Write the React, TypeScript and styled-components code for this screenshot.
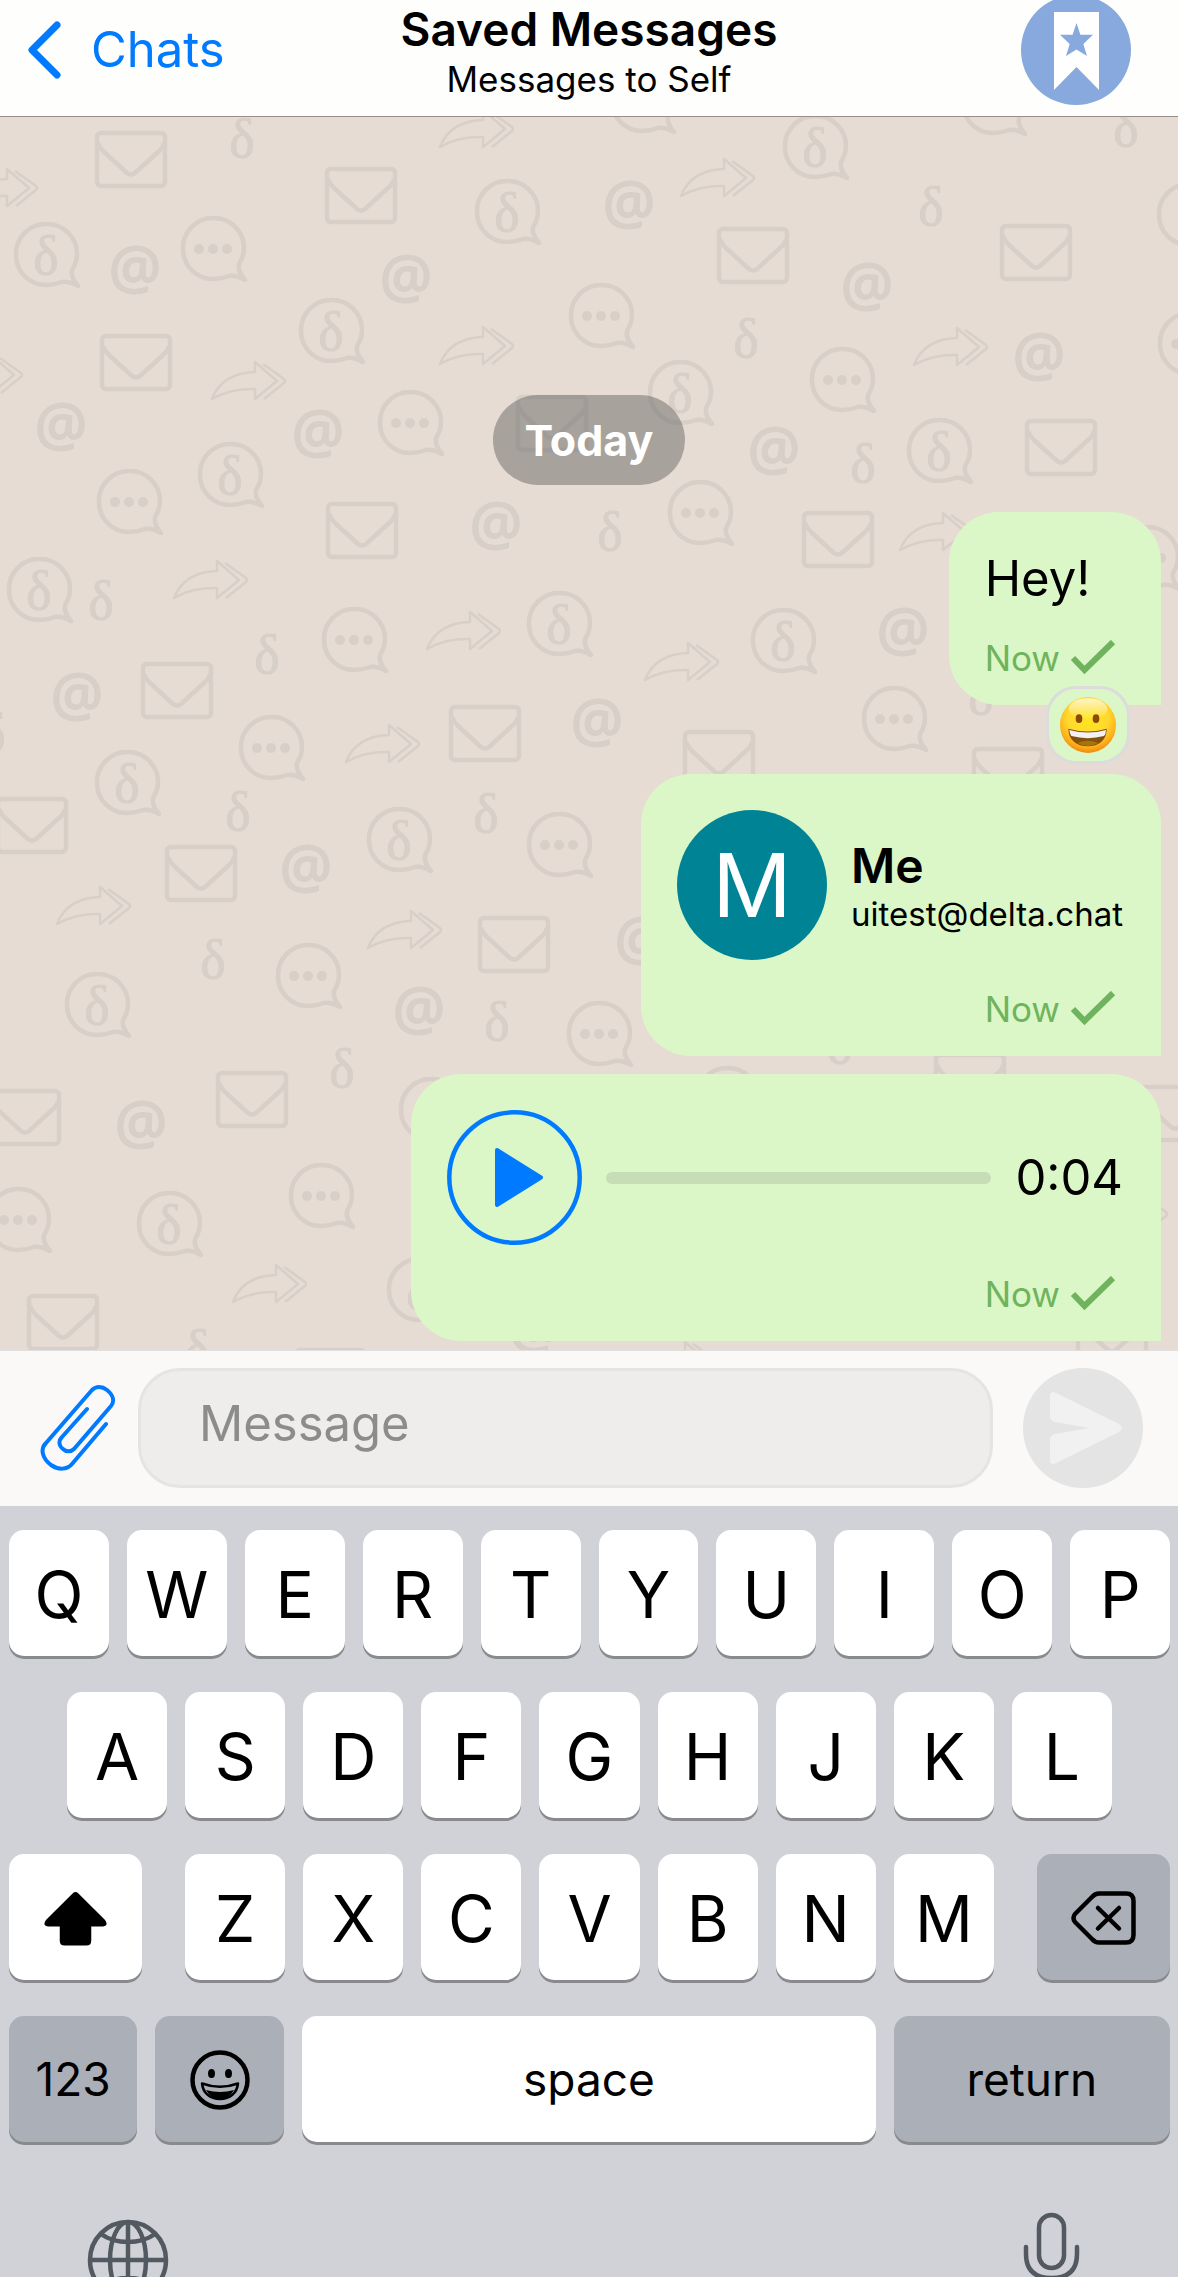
import React from "react";
import styled, { createGlobalStyle } from "styled-components";

const GlobalStyle = createGlobalStyle`
  *, *::before, *::after { box-sizing: border-box; }
  body { margin: 0; font-family: Inter, Roboto, "Liberation Sans", sans-serif; color: #000; }
  button, input { font: inherit; color: inherit; }
  button { border: 0; padding: 0; background: none; cursor: pointer; }
  h1, p { margin: 0; }
  svg { display: block; }
`;

const Screen = styled.div`
  height: 100vh;
  display: flex;
  flex-direction: column;
  overflow: hidden;
`;

/* ---------- header ---------- */

const Header = styled.header`
  flex: none;
  display: grid;
  grid-template-columns: 1fr auto 1fr;
  align-items: center;
  grid-template-rows: 100px;
  padding: 0 27px 16px;
  background: #fefefd;
  border-bottom: 1px solid #968e88;
`;

const BackLink = styled.a`
  display: flex;
  align-items: center;
  gap: 30px;
  font-size: 49px;
  line-height: 60px;
  color: #007aff;
  text-decoration: none;
`;

const TitleBlock = styled.div`
  text-align: center;
`;

const Title = styled.h1`
  font-size: 46px;
  line-height: 58px;
  font-weight: 600;
`;

const Subtitle = styled.p`
  font-size: 35px;
  line-height: 42px;
`;

const AvatarButton = styled.button`
  justify-self: end;
  margin: -5px 20px -5px 0;
  height: 110px;
`;

/* ---------- chat ---------- */

const Chat = styled.main`
  position: relative;
  flex: 1 1 0;
  min-height: 0;
  overflow: hidden;
  background: #e6dcd4;
`;

const Wallpaper = styled.svg`
  position: absolute;
  inset: 0;
  width: 100%;
  height: 100%;
  font-family: "Liberation Serif", serif;
`;

const MessageList = styled.div`
  position: relative;
  height: 100%;
  display: flex;
  flex-direction: column;
  justify-content: flex-end;
  align-items: flex-end;
  gap: 18px;
  padding: 0 17px 9px;
`;

const DayLabel = styled.div`
  align-self: center;
  margin-bottom: 9px;
  padding: 0 32px;
  border-radius: 45px;
  background: rgba(90, 90, 88, 0.45);
  color: #fff;
  font-size: 43px;
  line-height: 90px;
  font-weight: 700;
`;

const Bubble = styled.article<{ $wide?: boolean; $reacted?: boolean }>`
  position: relative;
  display: flex;
  flex-direction: column;
  gap: 28px;
  width: ${(p) => (p.$wide ? "750px" : "auto")};
  max-width: 100%;
  margin-bottom: ${(p) => (p.$reacted ? "51px" : "0")};
  padding: 36px 38px 26px 36px;
  border-radius: 50px 50px 0 50px;
  background: #dbf7c7;
`;

const MessageText = styled.p`
  font-size: 49px;
  line-height: 61px;
`;

const Meta = styled.div`
  display: flex;
  justify-content: flex-end;
  align-items: center;
  gap: 10px;
  padding-right: 7px;
  font-size: 35px;
  line-height: 42px;
  color: #70b35e;
`;

const Reaction = styled.button`
  position: absolute;
  right: 31px;
  bottom: -59px;
  width: 84px;
  height: 78px;
  display: grid;
  place-items: center;
  border: 3px solid #dcdcdc;
  border-radius: 30px;
  background: #dbf7c7;
`;

const Contact = styled.div`
  display: flex;
  align-items: center;
  gap: 24px;
`;

const Initial = styled.span`
  flex: none;
  width: 150px;
  height: 150px;
  border-radius: 50%;
  background: #008495;
  color: #fff;
  font-size: 88px;
  line-height: 150px;
  text-align: center;
`;

const ContactName = styled.p`
  font-size: 48px;
  line-height: 57px;
  font-weight: 600;
`;

const ContactAddress = styled.p`
  font-size: 33px;
  line-height: 40px;
`;

const Player = styled.div`
  display: flex;
  align-items: center;
  gap: 24px;
  font-size: 49px;
  line-height: 61px;
`;

const Seek = styled.input`
  flex: 1;
  min-width: 0;
  height: 12px;
  margin: 0;
  appearance: none;
  border-radius: 6px;
  background: #c7ddb6;
  &::-webkit-slider-thumb { appearance: none; width: 0; height: 0; }
`;

/* ---------- composer ---------- */

const Composer = styled.form`
  flex: none;
  display: flex;
  align-items: center;
  padding: 17px 35px 18px 40px;
  background: #faf9f8;
  border-top: 1px solid #e2dedb;
`;

const MessageField = styled.input`
  flex: 1;
  min-width: 0;
  height: 120px;
  margin: 0 30px 0 22px;
  padding: 0 58px 10px;
  border: 3px solid #e4e4e4;
  border-radius: 42px;
  background: #eeedeb;
  outline: none;
  font-size: 49px;
  &::placeholder { color: #8c8c8b; opacity: 1; }
`;

/* ---------- keyboard ---------- */

const Keyboard = styled.section`
  flex: none;
  display: flex;
  flex-direction: column;
  gap: 36px;
  padding-top: 24px;
  background: #d1d2d7;
`;

const KeyRow = styled.div<{ $inset?: boolean; $gap?: number }>`
  display: flex;
  gap: ${(p) => p.$gap ?? 18}px;
  padding: ${(p) => (p.$inset ? "0 66px 0 67px" : "0 8px 0 9px")};
`;

const KeyGroup = styled.div`
  flex: 808 1 0;
  display: flex;
  gap: 18px;
`;

const Key = styled.button<{ $grow?: number; $tone?: "dark"; $label?: boolean }>`
  flex: ${(p) => p.$grow ?? 100} 1 0;
  min-width: 0;
  height: 126px;
  display: flex;
  justify-content: center;
  align-items: center;
  padding-top: ${(p) => (p.$label ? 0 : 2)}px;
  border-radius: 15px;
  background: ${(p) => (p.$tone === "dark" ? "#abafb7" : "#fff")};
  box-shadow: 0 3px 0 #898a8d;
  font-size: ${(p) => (p.$label ? 46 : 64)}px;
`;

const KeyboardFooter = styled.div`
  height: 99px;
  display: flex;
  justify-content: space-between;
  padding: 34px 96px 0 86px;
  overflow: hidden;
`;

const FooterButton = styled.button`
  height: 96px;
`;

/* ---------- wallpaper ---------- */

type Kind = "env" | "arrow" | "at" | "delta" | "dbub" | "dots";

const ink = "#d7cfc8";

const wallpaper: Record<Kind, [number, number][]> = {
  env: [
    [95, 131], [325, 167], [100, 334], [516, 395], [326, 502], [717, 227], [1000, 224],
    [1025, 419], [802, 511], [141, 662], [449, 705], [-4, 797], [165, 845], [478, 916],
    [683, 730], [972, 747], [216, 1071], [-11, 1089], [27, 1294], [294, 1348], [934, 1053],
    [1139, 1085], [1076, 1308],
  ],
  arrow: [
    [439, 108], [-37, 167], [211, 360], [439, 325], [-52, 354], [680, 157], [913, 326],
    [899, 511], [173, 559], [426, 610], [345, 723], [56, 885], [367, 909], [644, 641],
    [232, 1263], [641, 1340], [1093, 1193],
  ],
  at: [
    [110, 247], [381, 256], [36, 404], [293, 411], [471, 503], [604, 182], [842, 264],
    [1014, 334], [749, 428], [52, 674], [572, 700], [281, 846], [878, 609], [394, 988],
    [616, 918], [116, 1102], [510, 1306],
  ],
  delta: [
    [229, 119], [1113, 108], [918, 187], [733, 319], [850, 444], [597, 512], [88, 581],
    [254, 635], [-20, 713], [225, 792], [473, 794], [200, 940], [484, 1002], [329, 1049],
    [968, 676], [184, 1330], [827, 1025],
  ],
  dbub: [
    [14, 222], [475, 179], [299, 298], [198, 442], [783, 114], [1157, 182], [648, 360],
    [907, 418], [7, 557], [527, 591], [95, 750], [367, 807], [65, 972], [399, 1077],
    [137, 1191], [387, 1257], [751, 608],
  ],
  dots: [
    [181, 216], [569, 283], [378, 390], [97, 469], [610, 68], [961, 70], [810, 347],
    [1158, 311], [668, 480], [322, 607], [239, 715], [527, 812], [276, 943], [567, 1001],
    [289, 1163], [-14, 1187], [862, 686], [1115, 525], [695, 1066],
  ],
};

const BubbleOutline = () => (
  <path d="M64 64Q55 53 59 46Q63 40 63 31A30 30 0 0 0 32 2A30 30 0 0 0 2 33A30 30 0 0 0 33 63Q40 63 48 60Q55 59 64 64Z" />
);

function Glyph({ kind }: { kind: Kind }) {
  switch (kind) {
    case "env":
      return (
        <>
          <rect x="2" y="2" width="68" height="53" rx="4" />
          <path d="M3 12Q5 17 9 21L32 42Q36 45 40 42L63 21Q68 17 69 12" />
        </>
      );
    case "arrow":
      return (
        <g strokeWidth="2.5">
          <path d="M1 39Q11 13 44 12L44 2L66 21L44 39L44 29Q20 28 1 39Z" />
          <path d="M52 4L73 19Q75 21 73 23L53 39" />
        </g>
      );
    case "at":
      return (
        <text x="25" y="42" fontSize="59" fontWeight="600" textAnchor="middle" fontFamily="Open Sans" fill={ink} strokeWidth="1">@</text>
      );
    case "delta":
      return (
        <text x="13" y="38" fontSize="54" textAnchor="middle" fill={ink} strokeWidth="1">δ</text>
      );
    case "dbub":
      return (
        <>
          <BubbleOutline />
          <text x="32" y="52" fontSize="54" textAnchor="middle" fill={ink} strokeWidth="1">δ</text>
        </>
      );
    default:
      return (
        <>
          <BubbleOutline />
          <g fill={ink} stroke="none">
            <circle cx="18" cy="33" r="5" />
            <circle cx="32" cy="33" r="5" />
            <circle cx="46" cy="33" r="5" />
          </g>
        </>
      );
  }
}

const ChatWallpaper = () => (
  <Wallpaper aria-hidden="true">
    <g transform="translate(0 -117)" fill="none" stroke={ink} strokeWidth="4.5" strokeLinejoin="round">
      {(Object.keys(wallpaper) as Kind[]).map((kind) =>
        wallpaper[kind].map(([x, y]) => (
          <g key={`${kind}-${x}-${y}`} transform={`translate(${x} ${y})`}>
            <Glyph kind={kind} />
          </g>
        )),
      )}
    </g>
  </Wallpaper>
);

/* ---------- icons ---------- */

const ChevronIcon = () => (
  <svg width="34" height="58" viewBox="0 0 34 58" fill="none" stroke="#007aff" strokeWidth="7" strokeLinecap="round" strokeLinejoin="round">
    <path d="M30 4L5 29L30 54" />
  </svg>
);

const BookmarkAvatar = () => (
  <svg width="110" height="110" viewBox="0 0 110 110">
    <circle cx="55" cy="55" r="55" fill="#88a9dd" />
    <path d="M33 17H78V95L55.5 72L33 95Z" fill="#fff" />
    <path d="M55.5 28L59.4 39.8H72L62.3 49L66 61L55.5 54.5L45 61L48.7 49L39 39.8H51.6Z" fill="#88a9dd" />
  </svg>
);

const CheckIcon = () => (
  <svg width="46" height="36" viewBox="0 0 46 36" fill="none" stroke="#70b35e" strokeWidth="6">
    <path d="M3 18L14.5 30L43 2" />
  </svg>
);

const GrinIcon = () => (
  <svg width="56" height="56" viewBox="0 0 168 168">
    <defs>
      <radialGradient id="face" cx="0.5" cy="0.36" r="0.66">
        <stop offset="0" stopColor="#ffe61f" />
        <stop offset="0.55" stopColor="#ffd92e" />
        <stop offset="0.8" stopColor="#fdb21c" />
        <stop offset="1" stopColor="#ee8208" />
      </radialGradient>
      <linearGradient id="shine" x1="0" y1="0" x2="0" y2="1">
        <stop offset="0" stopColor="#fff" stopOpacity="0.75" />
        <stop offset="1" stopColor="#fff" stopOpacity="0" />
      </linearGradient>
    </defs>
    <circle cx="84" cy="84" r="84" fill="url(#face)" />
    <ellipse cx="84" cy="36" rx="58" ry="32" fill="url(#shine)" />
    <ellipse cx="57" cy="65" rx="10" ry="13" fill="#8a4b05" />
    <ellipse cx="108" cy="65" rx="10" ry="13" fill="#8a4b05" />
    <path d="M25 95Q84 112 140 95C141 128 116 148 84 148C50 148 25 128 25 95Z" fill="#84500a" />
    <path d="M28 99Q84 114 138 99Q138 111 132 117Q84 130 34 117Q28 110 28 99Z" fill="#f1f1f6" />
    <path d="M52 138Q84 124 115 138Q84 156 52 138Z" fill="#a8720f" />
  </svg>
);

const PlayIcon = () => (
  <svg width="135" height="135" viewBox="0 0 135 135" fill="#007aff">
    <circle cx="67.5" cy="67.5" r="65.2" fill="none" stroke="#007aff" strokeWidth="4.5" />
    <path d="M50 40L94 67.5L50 95Z" stroke="#007aff" strokeWidth="4" strokeLinejoin="round" />
  </svg>
);

const PaperclipIcon = () => (
  <svg width="76" height="88" viewBox="40 24 76 88" fill="none" stroke="#007aff" strokeWidth="4" strokeLinecap="round" strokeLinejoin="round">
    <path d="M106 64L72 104C67 110 58 110 51 105C42 98 40 89 46 83L92 30C96 26 102 26 107 30C113 35 115 41 111 46L74 89C71 92 66 92 63 89C59 86 58 81 62 77L87 49" />
  </svg>
);

const SendIcon = () => (
  <svg width="120" height="120" viewBox="0 0 120 120">
    <circle cx="60" cy="60" r="60" fill="#e4e4e4" />
    <path d="M27 29Q27 22 33 25L96 56Q102 60 96 64L33 95Q27 98 27 92V72Q27 67 32 66L66 60L32 54Q27 53 27 48Z" fill="#f1f1f1" />
  </svg>
);

const ShiftIcon = () => (
  <svg width="63" height="55" viewBox="0 0 64 55">
    <path d="M29 2Q32 -1 35 2L62 29Q66 35 60 35.500H48V50Q48 55 43 55H21Q16 55 16 50V35.500H4Q-2 35 2 29Z" />
  </svg>
);

const DeleteIcon = () => (
  <svg width="65" height="54" viewBox="0 0 65 54" fill="none" stroke="#000" strokeWidth="4.500" strokeLinecap="round" strokeLinejoin="round">
    <path d="M28 2.500H55Q62.500 2.500 62.500 10V44Q62.500 51.500 55 51.500H28Q24 51.500 21 48L4 31Q1 27 4 23L21 6Q24 2.500 28 2.500Z" />
    <path d="M27 17L48 37.500M48 17L27 37.500" />
  </svg>
);

const EmojiKeyIcon = () => (
  <svg width="60" height="60" viewBox="0 0 60 60">
    <circle cx="30" cy="30" r="27.500" fill="none" stroke="#000" strokeWidth="4.500" />
    <ellipse cx="21.500" cy="23.500" rx="3.500" ry="4.500" />
    <ellipse cx="38.500" cy="23.500" rx="3.500" ry="4.500" />
    <path d="M12 33.500Q30 40 48 33.500C47 43 40 49 30 49C20 49 13 43 12 33.500Z" fill="none" stroke="#000" strokeWidth="2.500" strokeLinejoin="round" />
    <path d="M16 40Q30 44 44 40Q39 49 30 49Q21 49 16 40Z" />
  </svg>
);

const GlobeIcon = () => (
  <svg width="84" height="84" viewBox="0 0 84 84" fill="none" stroke="#525960" strokeWidth="4.500">
    <circle cx="42" cy="42" r="38" />
    <ellipse cx="42" cy="42" rx="18" ry="38" />
    <path d="M42 4V80M4 42H80M15 16Q26 24 42 24Q58 24 69 16M15 68Q26 60 42 60Q58 60 69 68" />
  </svg>
);

const MicIcon = () => (
  <svg width="60" height="96" viewBox="0 0 60 96" fill="none" stroke="#525960" strokeWidth="4.500" strokeLinecap="round">
    <rect x="17" y="3" width="25" height="53" rx="12.500" />
    <path d="M4 35V42Q4 66 29.500 66Q55 66 55 42V35M29.500 66V84M15 84H44" />
  </svg>
);

/* ---------- screen ---------- */

const Delivered = () => (
  <Meta>
    <span>Now</span>
    <CheckIcon />
  </Meta>
);

const keys = (letters: string) =>
  letters.split("").map((letter) => (
    <Key key={letter} type="button">{letter}</Key>
  ));

export default function App() {
  return (
    <Screen>
      <GlobalStyle />
      <Header>
        <BackLink href="#chats">
          <ChevronIcon />
          Chats
        </BackLink>
        <TitleBlock>
          <Title>Saved Messages</Title>
          <Subtitle>Messages to Self</Subtitle>
        </TitleBlock>
        <AvatarButton type="button" aria-label="Chat profile">
          <BookmarkAvatar />
        </AvatarButton>
      </Header>

      <Chat>
        <ChatWallpaper />
        <MessageList>
          <DayLabel>Today</DayLabel>
          <Bubble $reacted>
            <MessageText>Hey!</MessageText>
            <Delivered />
            <Reaction type="button" aria-label="Grinning face reaction">
              <GrinIcon />
            </Reaction>
          </Bubble>
          <Bubble>
            <Contact>
              <Initial>M</Initial>
              <div>
                <ContactName>Me</ContactName>
                <ContactAddress>uitest@delta.chat</ContactAddress>
              </div>
            </Contact>
            <Delivered />
          </Bubble>
          <Bubble $wide>
            <Player>
              <button type="button" aria-label="Play">
                <PlayIcon />
              </button>
              <Seek type="range" min="0" max="4" defaultValue="0" aria-label="Position" />
              <span>0:04</span>
            </Player>
            <Delivered />
          </Bubble>
        </MessageList>
      </Chat>

      <Composer>
        <button type="button" aria-label="Attach">
          <PaperclipIcon />
        </button>
        <MessageField type="text" placeholder="Message" aria-label="Message" />
        <button type="button" aria-label="Send">
          <SendIcon />
        </button>
      </Composer>

      <Keyboard aria-label="Keyboard">
        <KeyRow>{keys("QWERTYUIOP")}</KeyRow>
        <KeyRow $inset>{keys("ASDFGHJKL")}</KeyRow>
        <KeyRow $gap={43}>
          <Key type="button" $grow={133} aria-label="Shift"><ShiftIcon /></Key>
          <KeyGroup>{keys("ZXCVBNM")}</KeyGroup>
          <Key type="button" $grow={133} $tone="dark" aria-label="Delete"><DeleteIcon /></Key>
        </KeyRow>
        <KeyRow>
          <Key type="button" $grow={128} $tone="dark" $label>123</Key>
          <Key type="button" $grow={129} $tone="dark" aria-label="Emoji"><EmojiKeyIcon /></Key>
          <Key type="button" $grow={573} $label>space</Key>
          <Key type="button" $grow={276} $tone="dark" $label>return</Key>
        </KeyRow>
        <KeyboardFooter>
          <FooterButton type="button" aria-label="Next keyboard"><GlobeIcon /></FooterButton>
          <FooterButton type="button" aria-label="Dictate"><MicIcon /></FooterButton>
        </KeyboardFooter>
      </Keyboard>
    </Screen>
  );
}
